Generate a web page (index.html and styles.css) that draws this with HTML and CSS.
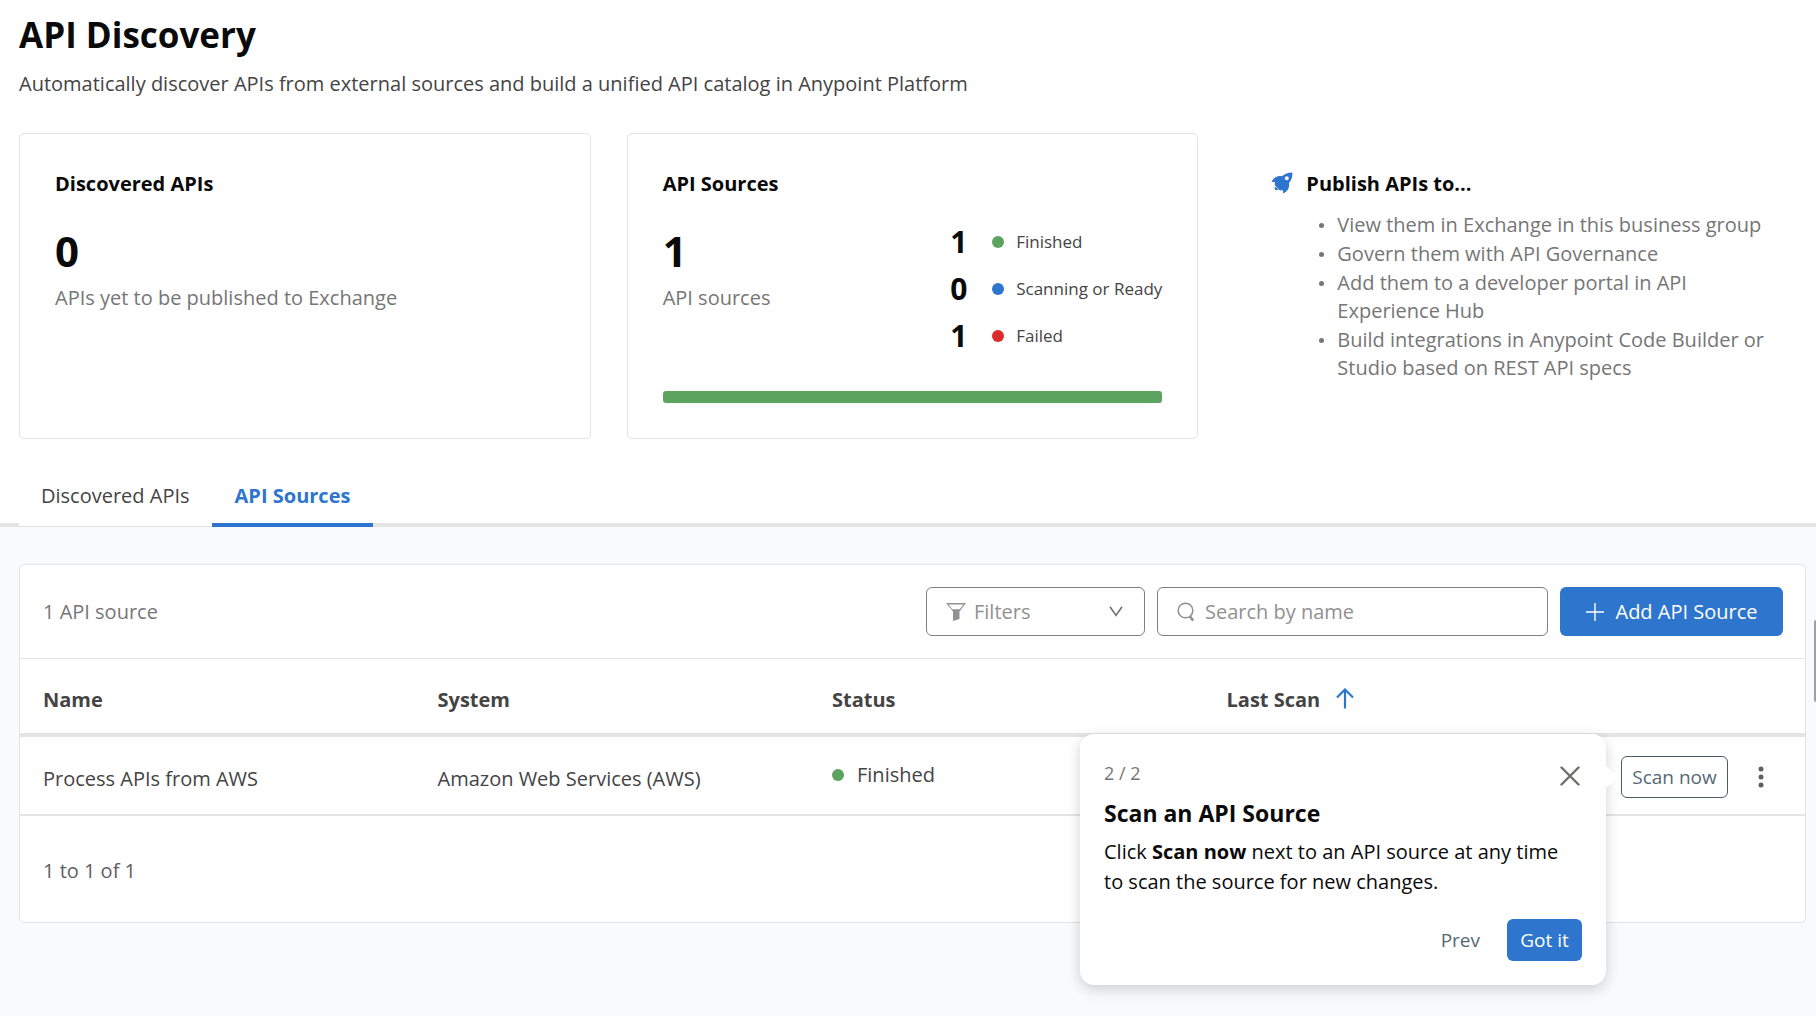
FILE: index.html
```html
<!DOCTYPE html>
<html lang="en">
<head>
  <meta charset="utf-8">
  <meta name="viewport" content="width=device-width, initial-scale=1">
  <title>API Discovery</title>
  <link rel="stylesheet" href="styles.css">
</head>
<body>
  <main class="page">
    <header class="page-header">
      <h1 class="page-title">API Discovery</h1>
      <p class="page-intro">Automatically discover APIs from external sources and build a unified API catalog in Anypoint Platform</p>
    </header>

    <section class="summary" aria-label="Summary">
      <article class="card">
        <h2 class="card-title">Discovered APIs</h2>
        <div class="metric">
          <p class="metric-value">0</p>
          <p class="metric-label">APIs yet to be published to Exchange</p>
        </div>
      </article>

      <article class="card">
        <h2 class="card-title">API Sources</h2>
        <div class="card-body">
          <div class="metric">
            <p class="metric-value">1</p>
            <p class="metric-label">API sources</p>
          </div>
          <ul class="legend">
            <li class="legend-item"><strong class="legend-count">1</strong><span class="dot dot-finished"></span><span>Finished</span></li>
            <li class="legend-item"><strong class="legend-count">0</strong><span class="dot dot-ready"></span><span>Scanning or Ready</span></li>
            <li class="legend-item"><strong class="legend-count">1</strong><span class="dot dot-failed"></span><span>Failed</span></li>
          </ul>
        </div>
        <div class="meter"></div>
      </article>

      <aside class="publish">
        <svg class="publish-icon" viewBox="0 0 22 22" aria-hidden="true">
          <path fill="currentColor" fill-rule="evenodd" d="M21.400.5C17 .5 13.500 1.800 11 4.300 6.800 3.400 2.500 5.500.5 10.200c1.300-.3 2.600-.2 3.600.3-.3 1.200-.4 2-.3 2.600l4.900 5.200c.8.200 1.800 0 2.800-.5.6 1.200.7 2.400.4 3.800 4.700-2 7-6.300 6.100-10.600C20.500 8.200 21.600 4.600 21.400.5ZM15.800 4.300a2 2 0 1 1 0 4 2 2 0 0 1 0-4ZM4 14.300c-.3 1.200-.1 2.700 0 3.700 1.300 0 2.500 0 3.700-.3Z"/>
        </svg>
        <div class="publish-body">
          <h2 class="card-title">Publish APIs to...</h2>
          <ul class="publish-list">
            <li>View them in Exchange in this business group</li>
            <li>Govern them with API Governance</li>
            <li>Add them to a developer portal in API Experience Hub</li>
            <li>Build integrations in Anypoint Code Builder or Studio based on REST API specs</li>
          </ul>
        </div>
      </aside>
    </section>

    <div class="tabs" role="tablist">
      <button class="tab" type="button" role="tab" aria-selected="false">Discovered APIs</button>
      <button class="tab tab-active" type="button" role="tab" aria-selected="true">API Sources</button>
    </div>

    <section class="content">
      <div class="panel">
        <div class="toolbar">
          <p class="toolbar-count">1 API source</p>
          <button class="filters" type="button">
            <svg class="filter-icon" viewBox="0 0 20 18" aria-hidden="true"><path fill="currentColor" fill-rule="evenodd" d="M0 0h20l-6.500 8.500v7.600L7 18V8.500ZM2.600 1.400 6.200 6.200h7.600l3.600-4.800Z"/></svg>
            <span class="filters-label">Filters</span>
            <svg class="chevron" viewBox="0 0 14 11" aria-hidden="true"><path fill="none" stroke="currentColor" stroke-width="1.500" d="M1 .8l6 8.700 6-8.700"/></svg>
          </button>
          <label class="search">
            <svg class="search-icon" viewBox="0 0 18 20" aria-hidden="true"><circle cx="8.500" cy="8.500" r="7.300" fill="none" stroke="currentColor" stroke-width="1.500"/><path stroke="currentColor" stroke-width="2.600" d="M12.800 14.200l3.400 4.400"/></svg>
            <input class="search-input" type="search" placeholder="Search by name" aria-label="Search by name">
          </label>
          <button class="button-primary add-source" type="button">
            <svg class="plus" viewBox="0 0 20 20" aria-hidden="true"><path fill="none" stroke="currentColor" stroke-width="1.400" d="M10 1v18M1 10h18"/></svg>
            <span>Add API Source</span>
          </button>
        </div>

        <table class="sources">
          <thead>
            <tr>
              <th scope="col">Name</th>
              <th scope="col">System</th>
              <th scope="col">Status</th>
              <th scope="col" aria-sort="ascending">
                <span class="sorted">Last Scan
                  <svg class="sort-arrow" viewBox="0 0 18 21" aria-hidden="true"><path fill="none" stroke="currentColor" stroke-width="2.200" d="M9 20.500V1.800M1 9.500l8-8 8 8"/></svg>
                </span>
              </th>
              <td class="actions-head"></td>
            </tr>
          </thead>
          <tbody>
            <tr>
              <td>Process APIs from AWS</td>
              <td>Amazon Web Services (AWS)</td>
              <td><span class="status"><span class="dot dot-finished"></span>Finished</span></td>
              <td></td>
              <td class="actions-cell">
                <div class="actions">
                  <button class="button-outline" type="button">Scan now</button>
                  <button class="more" type="button" aria-label="More actions">
                    <svg class="more-icon" viewBox="0 0 6 22" aria-hidden="true"><g fill="currentColor"><circle cx="3" cy="3" r="2.500"/><circle cx="3" cy="11" r="2.500"/><circle cx="3" cy="19" r="2.500"/></g></svg>
                  </button>
                  <div class="popover" role="dialog" aria-labelledby="tour-title">
                    <button class="popover-close" type="button" aria-label="Close">
                      <svg class="close-icon" viewBox="0 0 20 20" aria-hidden="true"><path fill="none" stroke="currentColor" stroke-width="2.400" stroke-linecap="round" d="M1.500 1.500l17 17M18.500 1.500l-17 17"/></svg>
                    </button>
                    <p class="popover-step">2 / 2</p>
                    <h3 class="popover-title" id="tour-title">Scan an API Source</h3>
                    <p class="popover-text">Click <strong>Scan now</strong> next to an API source at any time to scan the source for new changes.</p>
                    <div class="popover-buttons">
                      <button class="button-text" type="button">Prev</button>
                      <button class="button-primary got-it" type="button">Got it</button>
                    </div>
                  </div>
                </div>
              </td>
            </tr>
          </tbody>
        </table>
        <p class="pager">1 to 1 of 1</p>
      </div>
    </section>
    <div class="scroll-thumb"></div>
  </main>
</body>
</html>
```
FILE: styles.css
```css
* {
  box-sizing: border-box;
}

body,
h1,
h2,
h3,
p,
ul {
  margin: 0;
  padding: 0;
}

body {
  color: #444;
  background: #fff;
  font: 20px/28px "Open Sans", "Noto Sans", sans-serif;
}

button,
input {
  font: inherit;
  color: inherit;
  background: none;
  border: 0;
  padding: 0;
  margin: 0;
}

ul {
  list-style: none;
}

svg {
  display: block;
  flex: none;
}

.page {
  position: relative;
  display: flex;
  flex-direction: column;
  min-height: 100vh;
}

.page-header {
  padding: 11px 10px 0 19px;
}

.page-title {
  color: #0a0a0a;
  font-size: 35px;
  line-height: 48px;
}

.page-intro {
  margin-top: 11px;
}

/* Summary cards */

.summary {
  display: grid;
  grid-template-columns: repeat(3, minmax(0, 1fr));
  gap: 36px;
  padding: 35px 10px 0 19px;
}

.card {
  display: flex;
  flex-direction: column;
  padding: 36px 35px 35px;
  border: 1px solid #e4e4e4;
  border-radius: 5px;
}

.card-title {
  color: #0a0a0a;
  font-size: 20px;
  line-height: 28px;
}

.card-body {
  display: flex;
  justify-content: space-between;
}

.metric {
  padding-top: 25px;
}

.metric-value {
  color: #0a0a0a;
  font-size: 42px;
  font-weight: 700;
  line-height: 56px;
}

.metric-label {
  margin-top: 5px;
  color: #767676;
}

.legend {
  display: grid;
  gap: 1px;
  padding-top: 21px;
}

.legend-item {
  display: grid;
  grid-template-columns: 30px 12px auto;
  align-items: center;
  column-gap: 12px;
  font-size: 17px;
  line-height: 46px;
}

.legend-count {
  color: #0a0a0a;
  font-size: 30px;
}

.dot {
  width: 12px;
  height: 12px;
  border-radius: 50%;
}

.dot-finished {
  background: #5ba35e;
}

.dot-ready {
  background: #2e75ce;
}

.dot-failed {
  background: #d92c2c;
}

.meter {
  height: 12px;
  margin-top: 32px;
  border-radius: 3px;
  background: #5ba35e;
}

.publish {
  display: flex;
  gap: 13px;
  padding: 37px 20px 0 37px;
}

.publish-icon {
  width: 22px;
  height: 22px;
  margin-top: 2px;
  color: #2e75ce;
}

.publish-list {
  display: grid;
  gap: 1px;
  margin-top: 13px;
  padding-left: 31px;
  color: #767676;
}

.publish-list li {
  position: relative;
}

.publish-list li::before {
  content: "";
  position: absolute;
  top: 12px;
  left: -18px;
  width: 5px;
  height: 5px;
  border-radius: 50%;
  background: #767676;
}

/* Tabs */

.tabs {
  display: flex;
  align-items: flex-start;
  height: 60px;
  margin-top: 28px;
  padding-left: 19px;
  border-bottom: 4px solid #e4e4e4;
}

.tab {
  height: 60px;
  padding: 15px 22px 16px;
  border-bottom: 1px solid #e4e4e4;
  background: #fff;
}

.tab-active {
  height: 61px;
  padding: 15px 23px 13px;
  border-bottom: 5px solid #2e75ce;
  color: #2e75ce;
  font-weight: 700;
}

/* Sources panel */

.content {
  flex: 1;
  padding: 37px 10px 40px 19px;
  background: #f9fafc;
}

.panel {
  border: 1px solid #e4e4e4;
  border-radius: 5px;
  background: #fff;
}

.toolbar {
  display: flex;
  align-items: center;
  gap: 12px;
  padding: 22px 22px 22px 23px;
  border-bottom: 1px solid #e4e4e4;
}

.toolbar-count {
  flex: 1;
  color: #767676;
}

.filters,
.search {
  display: flex;
  align-items: center;
  height: 49px;
  padding: 0 19px;
  border: 1px solid #808080;
  border-radius: 6px;
  color: #919191;
}

.filters {
  width: 219px;
  gap: 8px;
}

.filters-label {
  flex: 1;
  text-align: left;
}

.filter-icon {
  width: 20px;
  height: 18px;
}

.chevron {
  width: 14px;
  height: 11px;
  margin-right: 2px;
  color: #706e6b;
}

.search {
  width: 391px;
  gap: 10px;
}

.search-icon {
  width: 18px;
  height: 20px;
}

.search-input {
  flex: 1;
  min-width: 0;
  outline: 0;
}

.search-input::placeholder {
  color: #919191;
  opacity: 1;
}

.button-primary {
  border-radius: 6px;
  color: #fff;
  background: #2e75ce;
}

.add-source {
  display: flex;
  align-items: center;
  justify-content: center;
  gap: 10px;
  width: 223px;
  height: 49px;
}

.plus {
  width: 20px;
  height: 20px;
}

.sources {
  width: 100%;
  border-collapse: separate;
  border-spacing: 0;
  table-layout: fixed;
}

.sources th,
.sources td {
  text-align: left;
  vertical-align: top;
}

.sources th {
  padding: 27px 23px 19px;
  border-bottom: 4px solid #e4e4e4;
}

.sources .actions-head {
  width: 207px;
  border-bottom: 4px solid #e4e4e4;
}

.sources tbody td {
  padding: 28px 23px 21px;
  border-bottom: 2px solid #e4e4e4;
}

.sorted {
  display: flex;
  gap: 16px;
}

.sort-arrow {
  width: 18px;
  height: 21px;
  margin-top: 2px;
  color: #2e75ce;
}

.status {
  display: flex;
  align-items: center;
  gap: 13px;
  line-height: 20px;
}

.sources tbody .actions-cell {
  padding: 19px 23px 16px;
}

.actions {
  position: relative;
  display: flex;
  align-items: center;
  gap: 22px;
}

.button-outline {
  width: 107px;
  height: 42px;
  border: 1px solid #4a5c69;
  border-radius: 6px;
  color: #566875;
  font-size: 19px;
}

.more {
  padding: 0 8px;
  color: #5f5f5f;
}

.more-icon {
  width: 6px;
  height: 22px;
}

.pager {
  padding: 41px 23px 37px;
  color: #5f5f5f;
}

/* Guided tour popover */

.popover {
  position: absolute;
  top: -22px;
  right: calc(100% + 15px);
  width: 526px;
  padding: 27px 24px 24px;
  border-radius: 14px;
  color: #0a0a0a;
  background: #fff;
  box-shadow: 0 4px 14px rgba(0, 0, 0, 0.18);
}

.popover::after {
  content: "";
  position: absolute;
  top: 32px;
  left: 100%;
  border: 11px solid transparent;
  border-left: 13px solid #fff;
  border-right: 0;
}

.popover-close {
  position: absolute;
  top: 32px;
  right: 26px;
  color: #706e6b;
}

.close-icon {
  width: 20px;
  height: 20px;
}

.popover-step {
  color: #767676;
  font-size: 18px;
  line-height: 24px;
}

.popover-title {
  margin-top: 12px;
  font-size: 23px;
  line-height: 32px;
}

.popover-text {
  margin-top: 8px;
  line-height: 30px;
}

.popover-buttons {
  display: flex;
  justify-content: flex-end;
  gap: 12px;
  margin-top: 22px;
}

.button-text {
  height: 42px;
  padding: 0 15px;
  color: #566875;
  font-size: 19px;
}

.got-it {
  width: 75px;
  height: 42px;
  font-size: 19px;
}

.scroll-thumb {
  position: absolute;
  top: 620px;
  right: 0;
  width: 2px;
  height: 82px;
  border-radius: 2px 0 0 2px;
  background: #a0a0a0;
}
```
